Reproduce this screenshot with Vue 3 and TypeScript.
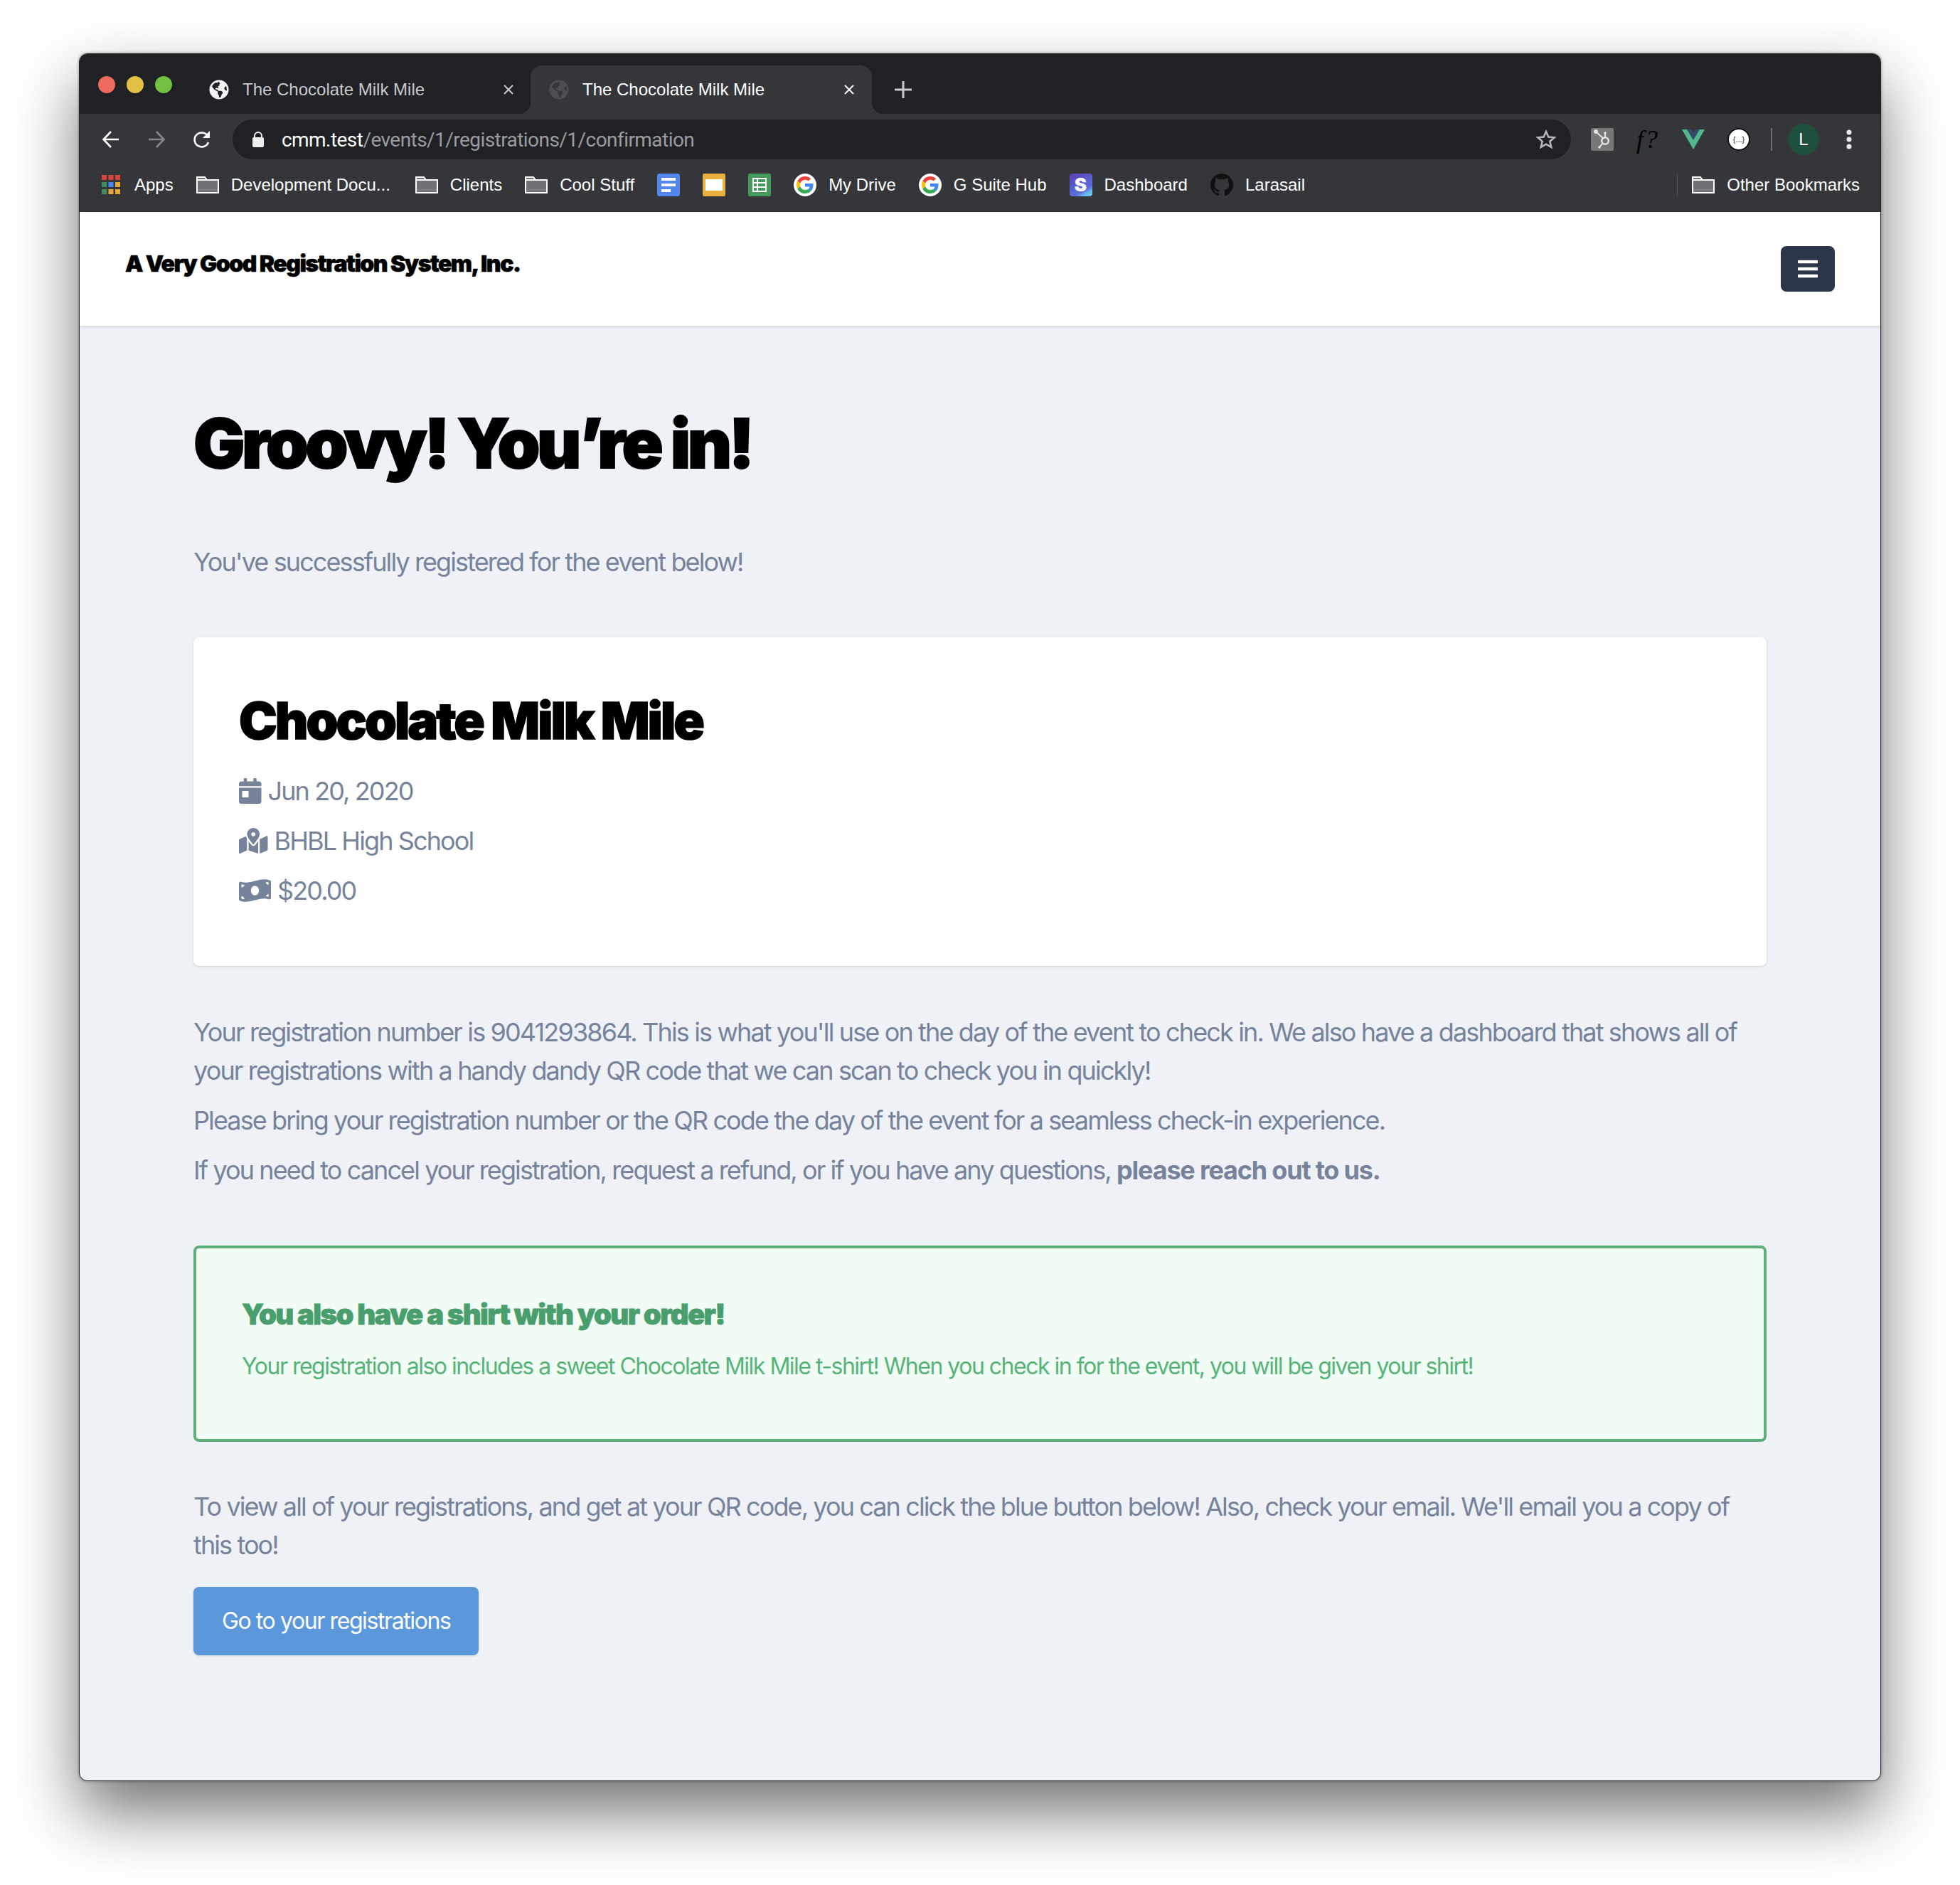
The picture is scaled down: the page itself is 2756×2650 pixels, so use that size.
<script setup lang="ts">
const bookmarks = ['Development Docu...', 'Clients', 'Cool Stuff']

const globePath =
  'M248 8C111.03 8 0 119.03 0 256s111.03 248 248 248 248-111.03 248-248S384.97 8 248 8zm82.29 357.6c-3.9 3.88-7.99 7.95-11.31 11.28-2.99 3-5.1 6.7-6.17 10.71-1.51 5.66-2.73 11.38-4.77 16.87l-17.39 46.85c-13.76 3-28 4.69-42.65 4.69v-27.38c1.69-12.62-7.64-36.26-22.63-51.25-6-6-9.37-14.14-9.37-22.63v-32.01c0-11.64-6.27-22.34-16.46-27.97-14.37-7.95-34.81-19.06-48.81-26.11-11.48-5.78-22.1-13.14-31.65-21.75l-.8-.72a114.792 114.792 0 0 1-18.06-20.74c-9.38-13.77-24.66-36.42-34.59-51.14 20.47-45.5 57.36-82.04 103.2-101.89l24.01 12.01C203.48 89.74 216 82.01 216 70.11v-11.3c7.99-1.29 16.12-2.11 24.47-2.41l28.3 28.3c6.25 6.25 6.25 16.38 0 22.63L264 112l-10.34 10.34c-3.12 3.12-3.12 8.19 0 11.31l4.69 4.69c3.12 3.12 3.12 8.19 0 11.31l-8 8a8.008 8.008 0 0 1-5.66 2.34h-8.99c-2.08 0-4.08.81-5.58 2.27l-9.92 9.65a8.008 8.008 0 0 0-1.58 9.31l15.59 31.19c2.66 5.32-1.21 11.58-7.15 11.58h-5.64c-1.93 0-3.79-.7-5.24-1.96l-9.28-8.06a16.017 16.017 0 0 0-15.55-3.1l-31.17 10.39a11.95 11.95 0 0 0-8.17 11.34c0 4.53 2.56 8.66 6.61 10.69l11.08 5.54c9.41 4.71 19.79 7.16 30.31 7.16s22.59 27.29 32 32h66.75c8.49 0 16.62 3.37 22.63 9.37l13.69 13.69a30.503 30.503 0 0 1 8.93 21.57 46.536 46.536 0 0 1-13.72 32.98zM417 274.25c-5.79-1.45-10.84-5-14.15-9.97l-17.98-26.97a23.97 23.97 0 0 1 0-26.62l19.59-29.38c2.32-3.47 5.5-6.28 9.24-8.15l12.98-6.49C440.2 193.59 448 223.87 448 256c0 8.67-.74 17.16-1.82 25.54L417 274.25z'
</script>

<template>
  <div class="page">
    <div class="window">
      <header class="chrome">
        <div class="tabstrip">
          <div class="lights">
            <span class="light red"></span>
            <span class="light yellow"></span>
            <span class="light green"></span>
          </div>
          <div class="tab">
            <svg class="globe" viewBox="0 0 496 512"><path :d="globePath" fill="#f1f3f4" /></svg>
            <span class="tab-title">The Chocolate Milk Mile</span>
            <svg class="close" viewBox="0 0 16 16"><path d="M2 2l12 12M14 2L2 14" stroke="#c8cace" stroke-width="2" /></svg>
          </div>
          <div class="tab active">
            <svg class="globe" viewBox="0 0 496 512"><path :d="globePath" fill="#4c4e52" /></svg>
            <span class="tab-title">The Chocolate Milk Mile</span>
            <svg class="close" viewBox="0 0 16 16"><path d="M2 2l12 12M14 2L2 14" stroke="#fff" stroke-width="2" /></svg>
          </div>
          <svg class="plus" viewBox="0 0 24 24"><path d="M12 0v24M0 12h24" stroke="#c8cace" stroke-width="3" /></svg>
        </div>
        <div class="toolbar">
          <svg class="nav-icon" viewBox="0 0 26 26"><path d="M24 13H3M13 2L2.500 13 13 24" fill="none" stroke="#fff" stroke-width="2.600" /></svg>
          <svg class="nav-icon" viewBox="0 0 26 26"><path d="M2 13h21M13 2l10.500 11L13 24" fill="none" stroke="#85878a" stroke-width="2.600" /></svg>
          <svg class="nav-icon" viewBox="0 0 26 26"><path d="M22 17a10 10 0 1 1-1-9" fill="none" stroke="#fff" stroke-width="2.600" /><path d="M24 1v10H14z" fill="#fff" /></svg>
          <div class="omnibox">
            <svg class="lock" viewBox="0 0 16 22"><path d="M3 9V6a5 5 0 0 1 10 0v3" fill="none" stroke="#eee" stroke-width="2" /><rect y="8" width="16" height="14" rx="2" fill="#eee" /></svg>
            <span class="url"><span class="host">cmm.test</span>/events/1/registrations/1/confirmation</span>
            <svg class="star" viewBox="0 0 24 24"><path d="M12 2.500l2.900 6.500 7.100.7-5.400 4.700 1.600 7-6.200-3.700-6.200 3.700 1.600-7L2 9.700 9.100 9z" fill="none" stroke="#b4b6b9" stroke-width="2.200" /></svg>
          </div>
          <div class="extensions">
            <div class="ext hubspot">
              <svg viewBox="0 0 32 32">
                <path d="M8 6l10 9M20 8v6M16 22l-4 5" stroke="#e4e4e4" stroke-width="2" />
                <circle cx="7" cy="5" r="3" fill="#e4e4e4" />
                <circle cx="20" cy="7" r="1.800" fill="#e4e4e4" />
                <circle cx="12" cy="27" r="1.800" fill="#e4e4e4" />
                <circle cx="20" cy="18" r="4.800" fill="none" stroke="#e4e4e4" stroke-width="2.500" />
              </svg>
            </div>
            <span class="ext fx">f?</span>
            <svg class="ext" viewBox="0 0 32 32"><path d="M0 2h10l6 11 6-11h10L16 30z" fill="#4fb98a" /><path d="M7 2h6l3 5 3-5h6L16 17z" fill="#364b6b" /></svg>
            <div class="ext json">{...}</div>
            <span class="divider"></span>
            <span class="avatar">L</span>
            <svg class="dots" viewBox="0 0 8 28"><circle cx="4" cy="4" r="3.500" fill="#e8eaed" /><circle cx="4" cy="14" r="3.500" fill="#e8eaed" /><circle cx="4" cy="24" r="3.500" fill="#e8eaed" /></svg>
          </div>
        </div>
        <div class="bookmarks">
          <div class="bookmark apps-mark">
            <svg class="mark" viewBox="0 0 26 28">
              <rect x="0" y="0" width="7" height="7" fill="#d9453a" /><rect x="9.500" y="0" width="7" height="7" fill="#d9453a" /><rect x="19" y="0" width="7" height="7" fill="#d9453a" />
              <rect x="0" y="10" width="7" height="7" fill="#3f8f5a" /><rect x="9.500" y="10" width="7" height="7" fill="#4285f4" /><rect x="19" y="10" width="7" height="7" fill="#e8a93a" />
              <rect x="0" y="20" width="7" height="7" fill="#3f8f5a" /><rect x="9.500" y="20" width="7" height="7" fill="#e8a93a" /><rect x="19" y="20" width="7" height="7" fill="#e8a93a" />
            </svg>
            <span>Apps</span>
          </div>
          <div v-for="label in bookmarks" :key="label" class="bookmark">
            <svg class="mark" viewBox="0 0 32 24"><path d="M1 23V1h11l3 4h16v18z" fill="#6f7174" stroke="#fff" stroke-width="2" /><path d="M1 5h30" stroke="#fff" stroke-width="2" /><path d="M2 19h28" stroke="#8a8c8f" stroke-width="1" /></svg>
            <span>{{ label }}</span>
          </div>
          <svg class="mark" viewBox="0 0 32 32"><rect width="32" height="32" rx="3" fill="#5386ea" /><path d="M6 6h20v4H6zM6 14h20v4H6zM6 22h13v4H6z" fill="#fff" /></svg>
          <svg class="mark" viewBox="0 0 32 32"><rect width="32" height="32" rx="2" fill="#e9b240" /><rect x="4" y="8" width="24" height="16" fill="#fff" /></svg>
          <svg class="mark" viewBox="0 0 32 32"><rect width="32" height="32" rx="2" fill="#43995c" /><path d="M7 7h18v18H7zM7 13h18M7 19h18M13 7v18" fill="none" stroke="#fff" stroke-width="2" /></svg>
          <div class="bookmark">
            <svg class="mark" viewBox="0 0 32 32">
              <circle cx="16" cy="16" r="16" fill="#fff" />
              <svg x="4" y="4" width="24" height="24" viewBox="0 0 48 48">
                <path fill="#EA4335" d="M24 9.500c3.540 0 6.710 1.220 9.210 3.600l6.850-6.850C35.900 2.380 30.470 0 24 0 14.620 0 6.510 5.380 2.560 13.220l7.980 6.190C12.430 13.720 17.740 9.500 24 9.500z" />
                <path fill="#4285F4" d="M46.980 24.550c0-1.570-.15-3.090-.38-4.550H24v9.020h12.940c-.58 2.960-2.260 5.480-4.780 7.180l7.730 6c4.510-4.180 7.090-10.360 7.090-17.650z" />
                <path fill="#FBBC05" d="M10.530 28.590c-.48-1.450-.76-2.990-.76-4.590s.27-3.140.76-4.590l-7.980-6.190C.92 16.460 0 20.120 0 24c0 3.880.92 7.540 2.560 10.780l7.970-6.190z" />
                <path fill="#34A853" d="M24 48c6.480 0 11.930-2.130 15.890-5.810l-7.730-6c-2.150 1.450-4.920 2.300-8.160 2.300-6.260 0-11.570-4.220-13.470-9.910l-7.980 6.190C6.510 42.620 14.620 48 24 48z" />
              </svg>
            </svg>
            <span>My Drive</span>
          </div>
          <div class="bookmark">
            <svg class="mark" viewBox="0 0 32 32">
              <circle cx="16" cy="16" r="16" fill="#fff" />
              <svg x="4" y="4" width="24" height="24" viewBox="0 0 48 48">
                <path fill="#EA4335" d="M24 9.500c3.540 0 6.710 1.220 9.210 3.600l6.850-6.850C35.900 2.380 30.470 0 24 0 14.620 0 6.510 5.380 2.560 13.220l7.980 6.190C12.430 13.720 17.740 9.500 24 9.500z" />
                <path fill="#4285F4" d="M46.980 24.550c0-1.570-.15-3.090-.38-4.550H24v9.020h12.940c-.58 2.960-2.260 5.480-4.780 7.180l7.730 6c4.510-4.180 7.090-10.360 7.090-17.650z" />
                <path fill="#FBBC05" d="M10.530 28.590c-.48-1.450-.76-2.990-.76-4.590s.27-3.140.76-4.590l-7.980-6.190C.92 16.460 0 20.120 0 24c0 3.880.92 7.540 2.560 10.780l7.970-6.190z" />
                <path fill="#34A853" d="M24 48c6.480 0 11.930-2.130 15.890-5.810l-7.730-6c-2.150 1.450-4.920 2.300-8.160 2.300-6.260 0-11.570-4.220-13.470-9.910l-7.980 6.190C6.510 42.620 14.620 48 24 48z" />
              </svg>
            </svg>
            <span>G Suite Hub</span>
          </div>
          <div class="bookmark">
            <span class="mark stripe">S</span>
            <span>Dashboard</span>
          </div>
          <div class="bookmark">
            <svg class="mark" viewBox="0 0 16 16"><path fill="#111" d="M8 0C3.580 0 0 3.580 0 8c0 3.540 2.290 6.530 5.470 7.590.4.070.55-.17.55-.38 0-.19-.010-.82-.010-1.490-2.010.37-2.530-.49-2.690-.94-.09-.23-.48-.94-.82-1.130-.28-.15-.68-.52-.010-.53.63-.010 1.080.58 1.230.82.72 1.210 1.870.87 2.330.66.070-.52.28-.87.51-1.070-1.780-.2-3.640-.89-3.640-3.950 0-.87.310-1.590.82-2.150-.08-.2-.36-1.020.080-2.120 0 0 .67-.21 2.200.82.640-.18 1.320-.27 2-.27s1.360.09 2 .27c1.530-1.040 2.200-.82 2.200-.82.440 1.100.16 1.920.080 2.120.51.56.82 1.270.82 2.150 0 3.070-1.870 3.750-3.650 3.950.29.25.54.73.54 1.480 0 1.070-.010 1.930-.010 2.200 0 .21.150.46.550.38A8.010 8.010 0 0 0 16 8c0-4.420-3.580-8-8-8z" /></svg>
            <span>Larasail</span>
          </div>
          <div class="other">
            <svg class="mark" viewBox="0 0 32 24"><path d="M1 23V1h11l3 4h16v18z" fill="#6f7174" stroke="#fff" stroke-width="2" /><path d="M1 5h30" stroke="#fff" stroke-width="2" /><path d="M2 19h28" stroke="#8a8c8f" stroke-width="1" /></svg>
            <span>Other Bookmarks</span>
          </div>
        </div>
      </header>

      <nav class="navbar">
        <span class="logo">A Very Good Registration System, Inc.</span>
        <button class="menu-btn">
          <svg viewBox="0 0 448 512"><path fill="#fff" d="M16 132h416c8.837 0 16-7.163 16-16V76c0-8.837-7.163-16-16-16H16C7.163 60 0 67.163 0 76v40c0 8.837 7.163 16 16 16zm0 160h416c8.837 0 16-7.163 16-16v-40c0-8.837-7.163-16-16-16H16c-8.837 0-16 7.163-16 16v40c0 8.837 7.163 16 16 16zm0 160h416c8.837 0 16-7.163 16-16v-40c0-8.837-7.163-16-16-16H16c-8.837 0-16 7.163-16 16v40c0 8.837 7.163 16 16 16z" /></svg>
        </button>
      </nav>

      <main class="content">
        <h1>Groovy! You’re in!</h1>
        <p class="lead">You've successfully registered for the event below!</p>

        <section class="card">
          <h2>Chocolate Milk Mile</h2>
          <div class="meta">
            <svg class="meta-icon" viewBox="0 0 448 512"><path d="M0 464c0 26.500 21.500 48 48 48h352c26.500 0 48-21.500 48-48V192H0v272zm64-192c0-8.800 7.200-16 16-16h96c8.800 0 16 7.200 16 16v96c0 8.800-7.200 16-16 16H80c-8.800 0-16-7.200-16-16v-96zM400 64h-48V16c0-8.800-7.200-16-16-16h-32c-8.800 0-16 7.200-16 16v48H160V16c0-8.800-7.200-16-16-16h-32c-8.800 0-16 7.200-16 16v48H48C21.500 64 0 85.500 0 112v48h448v-48c0-26.500-21.500-48-48-48z" /></svg>
            <span>Jun 20, 2020</span>
          </div>
          <div class="meta">
            <svg class="meta-icon" viewBox="0 0 576 512"><path d="M288 0c-69.590 0-126 56.410-126 126 0 56.260 82.350 158.800 113.900 196.020 6.390 7.540 17.820 7.540 24.200 0C331.650 284.800 414 182.260 414 126 414 56.410 357.590 0 288 0zm0 168c-23.200 0-42-18.800-42-42s18.800-42 42-42 42 18.800 42 42-18.800 42-42 42zM20.120 215.950A32.006 32.006 0 0 0 0 245.660v250.320c0 11.320 11.430 19.060 21.940 14.860L160 448V214.920c-8.840-15.980-16.070-31.540-21.250-46.420L20.120 215.950zM288 359.670c-14.070 0-27.380-6.180-36.510-16.960-19.660-23.200-40.570-49.620-59.490-76.720V448l192 64V266c-18.920 27.090-39.820 53.520-59.490 76.720-9.130 10.770-22.440 16.950-36.510 16.950zm266.060-198.510L416 224v288l139.880-55.950A31.996 31.996 0 0 0 576 426.340V176.020c0-11.320-11.430-19.060-21.940-14.860z" /></svg>
            <span>BHBL High School</span>
          </div>
          <div class="meta">
            <svg class="meta-icon" viewBox="0 0 640 512"><path d="M621.160 54.460C582.370 38.190 543.550 32 504.750 32c-123.170-.010-246.330 62.340-369.500 62.340-30.890 0-61.760-3.920-92.650-13.720-3.470-1.100-6.950-1.620-10.350-1.620C15.040 79 0 92.320 0 110.810v317.260c0 12.630 7.230 24.600 18.840 29.460C57.630 473.810 96.450 480 135.250 480c123.170 0 246.340-62.350 369.510-62.350 30.890 0 61.760 3.920 92.650 13.720 3.470 1.100 6.950 1.620 10.350 1.620 17.210 0 32.250-13.320 32.250-31.810V83.930c-.010-12.640-7.240-24.600-18.850-29.470zM48 132.220c20.120 5.040 41.120 7.570 62.720 8.930C104.840 170.540 79 192.690 48 192.690v-60.470zm0 285v-47.780c34.370 0 62.180 27.270 63.710 61.400-22.530-1.810-43.590-6.310-63.710-13.620zM320 352c-44.190 0-80-42.990-80-96 0-53.020 35.820-96 80-96s80 42.980 80 96c0 53.030-35.830 96-80 96zm272 27.780c-17.520-4.390-35.710-6.850-54.320-8.440 5.870-26.080 27.500-45.880 54.320-49.280v57.720zm0-236.110c-30.890-3.910-54.860-29.700-55.810-61.550 19.540 2.170 38.090 6.230 55.810 12.660v48.890z" /></svg>
            <span>$20.00</span>
          </div>
        </section>

        <div class="copy">
          <p>Your registration number is 9041293864. This is what you'll use on the day of the event to check in. We also have a dashboard that shows all of your registrations with a handy dandy QR code that we can scan to check you in quickly!</p>
          <p>Please bring your registration number or the QR code the day of the event for a seamless check-in experience.</p>
          <p>If you need to cancel your registration, request a refund, or if you have any questions, <strong>please reach out to us.</strong></p>
        </div>

        <section class="notice">
          <h3>You also have a shirt with your order!</h3>
          <p>Your registration also includes a sweet Chocolate Milk Mile t-shirt! When you check in for the event, you will be given your shirt!</p>
        </section>

        <p class="closing">To view all of your registrations, and get at your QR code, you can click the blue button below! Also, check your email. We'll email you a copy of this too!</p>
        <a class="cta">Go to your registrations</a>
      </main>
    </div>
  </div>
</template>

<style>
html,
body {
  margin: 0;
  background: #fff;
}
</style>

<style scoped>
.page {
  box-sizing: border-box;
  width: 2756px;
  height: 2650px;
  padding: 75px 111px 0;
  overflow: hidden;
}

.window {
  box-sizing: border-box;
  width: 2534px;
  height: 2429px;
  border: 1px solid #222;
  border-radius: 12px;
  overflow: hidden;
  background: #eef1f6;
  box-shadow: 0 44px 90px rgba(0, 0, 0, 0.55), 0 0 4px rgba(0, 0, 0, 0.4);
  display: flex;
  flex-direction: column;
}

/* browser chrome */
.chrome {
  font-family: 'Liberation Sans', sans-serif;
  font-size: 24px;
  color: #e8eaed;
  background: #35363a;
}

.tabstrip {
  height: 84px;
  padding-left: 26px;
  background: #202124;
  display: flex;
  align-items: flex-end;
}

.lights {
  display: flex;
  gap: 16px;
  align-self: flex-start;
  padding-top: 31px;
  width: 134px;
  flex: none;
}

.light {
  width: 24px;
  height: 24px;
  border-radius: 50%;
}
.red { background: #ee6a5e; }
.yellow { background: #e2c044; }
.green { background: #72c143; }

.tab {
  position: relative;
  box-sizing: border-box;
  width: 474px;
  height: 68px;
  padding: 0 23px 0 22px;
  border-radius: 16px 16px 0 0;
  display: flex;
  align-items: center;
  color: #c8cace;
  flex: none;
}

.tab.active {
  width: 480px;
  padding: 0 24px 0 26px;
  background: #35363a;
  color: #fff;
}

.tab.active::before,
.tab.active::after {
  content: '';
  position: absolute;
  bottom: 0;
  width: 16px;
  height: 16px;
}
.tab.active::before {
  left: -16px;
  background: radial-gradient(circle at 0 0, #202124 16px, #35363a 16.500px);
}
.tab.active::after {
  right: -16px;
  background: radial-gradient(circle at 100% 0, #202124 16px, #35363a 16.500px);
}

.globe {
  width: 28px;
  height: 28px;
  flex: none;
}

.tab-title {
  margin-left: 19px;
  flex: 1;
}

.close {
  width: 16px;
  height: 16px;
}

.plus {
  width: 24px;
  height: 24px;
  margin: 0 0 22px 32px;
}

.toolbar {
  height: 72px;
  padding-left: 31px;
  display: flex;
  align-items: center;
  gap: 38px;
}

.nav-icon {
  width: 26px;
  height: 26px;
  flex: none;
}

.omnibox {
  width: 1882px;
  height: 56px;
  margin-left: -8px;
  padding: 0 21px 0 28px;
  box-sizing: border-box;
  background: #202124;
  border-radius: 28px;
  display: flex;
  align-items: center;
  color: #9a9ca0;
  font-family: Roboto, sans-serif;
  font-size: 28px;
  letter-spacing: -0.55px;
}

.lock {
  width: 16px;
  height: 22px;
  margin-right: 25px;
}

.host {
  color: #fff;
}

.url {
  flex: 1;
}

.star {
  width: 28px;
  height: 28px;
}

.extensions {
  display: flex;
  align-items: center;
  margin-left: -10px;
}

.ext {
  width: 32px;
  height: 32px;
  margin-right: 32px;
  flex: none;
}

.hubspot {
  background: #777;
  border-radius: 2px;
}

.fx {
  font-family: 'Liberation Serif', serif;
  font-style: italic;
  font-size: 36px;
  line-height: 32px;
  letter-spacing: 2px;
  color: #000;
}

.json {
  height: 32px;
  margin-right: 29px;
  background: #fff;
  border: 2px solid #111;
  box-sizing: border-box;
  border-radius: 50%;
  color: #222;
  font-size: 11px;
  line-height: 28px;
  text-align: center;
}

.divider {
  width: 2px;
  height: 32px;
  background: #6b6d70;
  margin-right: 22px;
}

.avatar {
  width: 44px;
  height: 44px;
  border-radius: 50%;
  background: #1f4f3d;
  color: #fff;
  text-align: center;
  line-height: 44px;
  margin-right: 38px;
}

.dots {
  width: 8px;
  height: 28px;
}

.bookmarks {
  height: 56px;
  padding: 0 29px 9px 31px;
  display: flex;
  align-items: center;
  gap: 32px;
  border-bottom: 1px solid #2c2d30;
  color: #fff;
}

.bookmark {
  display: flex;
  align-items: center;
  gap: 17px;
}

.bookmark:nth-child(2) {
  margin-right: 3px;
}

.apps-mark {
  gap: 20px;
}
.apps-mark .mark {
  width: 26px;
  height: 28px;
}

.mark {
  width: 32px;
  height: 32px;
  flex: none;
}

.stripe {
  border-radius: 4px;
  background: linear-gradient(150deg, #5a3fb5, #5c6fdc 70%, #6bc0ee 85%);
  color: #fff;
  font: 900 26px/32px Inter, sans-serif;
  text-align: center;
}

.other {
  margin-left: auto;
  height: 32px;
  padding-left: 20px;
  border-left: 1px solid #55575a;
  display: flex;
  align-items: center;
  gap: 17px;
}

/* page */
.navbar {
  height: 160px;
  flex: none;
  box-sizing: border-box;
  padding: 48px 64px;
  background: #fff;
  box-shadow: 0 2px 4px rgba(0, 0, 0, 0.12);
  display: flex;
  justify-content: space-between;
  align-items: flex-start;
  position: relative;
}

.logo {
  font-family: Inter, sans-serif;
  font-weight: 900;
  font-size: 32px;
  line-height: 50px;
  letter-spacing: -1.5px;
  -webkit-text-stroke: 0.6px #000;
  color: #000;
}

.menu-btn {
  width: 76px;
  height: 64px;
  padding: 0;
  border: 0;
  border-radius: 8px;
  background: #2d3548;
  display: flex;
  align-items: center;
  justify-content: center;
}
.menu-btn svg {
  width: 28px;
  height: 32px;
}

.content {
  padding: 117px 160px 0;
  font-family: Inter, sans-serif;
  font-size: 36px;
  line-height: 54px;
  letter-spacing: -1.9px;
  color: #76839a;
}

h1,
h2,
h3 {
  margin: 0;
  font-family: Inter, sans-serif;
  font-weight: 900;
  color: #000;
}

h1 {
  font-size: 96px;
  line-height: 96px;
  letter-spacing: -4.5px;
  -webkit-text-stroke: 2px #000;
}

p {
  margin: 0;
}

.lead {
  margin-top: 92px;
}

.card {
  box-sizing: border-box;
  height: 462px;
  margin-top: 79px;
  padding: 81px 64px 0;
  background: #fff;
  border-radius: 8px;
  box-shadow: 0 1px 3px rgba(0, 0, 0, 0.15);
}

h2 {
  font-size: 72px;
  line-height: 72px;
  letter-spacing: -3px;
  -webkit-text-stroke: 1.5px #000;
  margin-bottom: 36px;
}

.meta {
  display: flex;
  align-items: center;
  gap: 9px;
  height: 54px;
  margin-bottom: 16px;
}

.meta-icon {
  height: 36px;
  fill: #76839a;
  flex: none;
}

.copy {
  margin-top: 66px;
  display: flex;
  flex-direction: column;
  gap: 16px;
}

.copy p:first-child {
  letter-spacing: -1.86px;
}

strong {
  font-weight: 700;
  letter-spacing: -1.2px;
}

.notice {
  box-sizing: border-box;
  height: 276px;
  margin-top: 79px;
  padding: 69px 64px 0;
  background: #f1fdf4;
  border: 4px solid #5cae7b;
  border-radius: 8px;
  color: #57b37a;
  font-size: 32px;
  line-height: 48px;
  letter-spacing: -1.5px;
}

.notice h3 {
  font-size: 40px;
  line-height: 48px;
  letter-spacing: -1.6px;
  -webkit-text-stroke: 0.8px #4a9e6e;
  color: #4a9e6e;
  margin-bottom: 25px;
}

.closing {
  margin-top: 64px;
}

.cta {
  display: inline-block;
  margin-top: 32px;
  padding: 24px 40px;
  background: #5b98db;
  border-radius: 8px;
  color: #fff;
  font-size: 32px;
  line-height: 48px;
  letter-spacing: -1.4px;
  box-shadow: 0 1px 3px rgba(0, 0, 0, 0.15);
}
</style>
